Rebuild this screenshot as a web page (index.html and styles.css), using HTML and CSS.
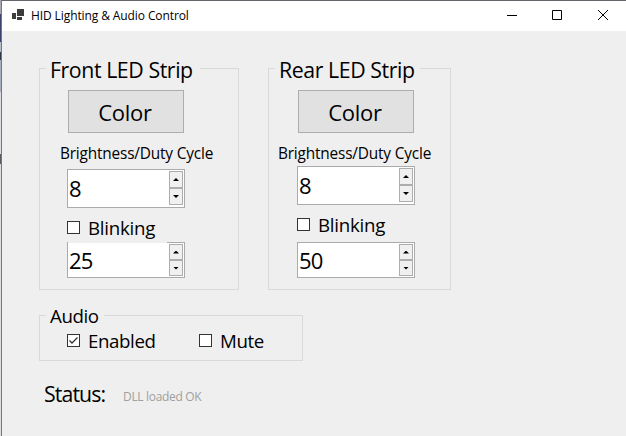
FILE: index.html
```
<!DOCTYPE html>
<html lang="en">
<head>
<meta charset="utf-8">
<title>HID Lighting &amp; Audio Control</title>
<link rel="stylesheet" href="styles.css">
</head>
<body>
<div class="desktop">
  <div class="window">
    <header class="titlebar">
      <svg class="app-icon" width="12" height="11" viewBox="0 0 12 11"><path fill="#3c3c3c" d="M0 4h4v6H0zM5 0h7v7H5zM5 8h5v3H5z"/></svg>
      <span class="title">HID Lighting &amp; Audio Control</span>
      <svg class="caption" width="102" height="12" viewBox="0 0 102 12" fill="none" stroke="#000"><path d="M0 6.500h10M45.500 1.500h9v9h-9zM91 1l10 10M101 1l-10 10"/></svg>
    </header>
    <main class="client">
      <div class="strips">
        <fieldset class="group front">
          <legend class="legend big">Front LED Strip</legend>
          <button class="color">Color</button>
          <div class="caption-label">Brightness/Duty Cycle</div>
          <div class="spinner duty"><span class="value">8</span><span class="buttons"><i class="up"></i><i class="down"></i></span></div>
          <label class="check"><span class="box"></span><span>Blinking</span></label>
          <div class="spinner rate clipped"><span class="value">25</span><span class="buttons"><i class="up"></i><i class="down"></i></span></div>
        </fieldset>
        <fieldset class="group rear">
          <legend class="legend big">Rear LED Strip</legend>
          <button class="color">Color</button>
          <div class="caption-label">Brightness/Duty Cycle</div>
          <div class="spinner duty"><span class="value">8</span><span class="buttons"><i class="up"></i><i class="down"></i></span></div>
          <label class="check"><span class="box"></span><span>Blinking</span></label>
          <div class="spinner rate"><span class="value">50</span><span class="buttons"><i class="up"></i><i class="down"></i></span></div>
        </fieldset>
      </div>
      <fieldset class="group audio">
        <legend class="legend small">Audio</legend>
        <div class="audio-row">
          <label class="check enabled"><span class="box"><svg width="11" height="11" viewBox="0 0 11 11"><path d="M1.500 5.500l2.500 2.500 5.500-5.500" fill="none" stroke="#333" stroke-width="1.300"/></svg></span><span>Enabled</span></label>
          <label class="check"><span class="box"></span><span>Mute</span></label>
        </div>
      </fieldset>
      <div class="status"><span class="status-name">Status:</span><span class="status-text">DLL loaded OK</span></div>
    </main>
  </div>
</div>
</body>
</html>
```
FILE: styles.css
```
* { box-sizing: border-box; }
body { margin: 0; font-family: "Open Sans", "Noto Sans", sans-serif; color: #000; overflow: hidden; }
.desktop {
  height: 436px;
  padding-left: 1px;
  background: linear-gradient(#a5a7b5 0 14px, #3b4270 14px 42px, #b8bcc9 42px 52px, #303848 52px 60px, #a9afbd 60px 92px, #dcdce2 92px 154px, #5c5a60 154px 164px, #dedee2 164px);
}
.window { height: 436px; border-left: 1px solid #77777a; border-top: 1px solid #66636a; background: #efefef; }
.titlebar { display: flex; align-items: center; height: 30px; padding: 0 17px 0 10px; background: #fff; }
.app-icon { margin-top: -4px; }
.title { margin-left: 7px; font-size: 12px; line-height: 30px; letter-spacing: -0.1px; white-space: nowrap; }
.caption { margin-left: auto; margin-top: -3px; }
.client { padding: 22px 0 0 37px; }
.strips { display: flex; gap: 29px; }
.group { margin: 0; border: 1px solid #d9d9d9; padding: 0; min-width: 0; white-space: nowrap; }
.legend { margin-left: 6px; padding: 0 0 0 4px; }
.big { height: 31px; font-size: 21.3px; line-height: 34px; letter-spacing: -0.42px; }
.front { width: 200px; height: 237px; }
.rear { width: 183px; height: 237px; }
.front .big { width: 154px; }
.rear .big { width: 145px; }
.color { display: block; width: 116px; height: 43px; margin: 6px 0 0 28px; padding: 0 2px 0 0; border: 1px solid #adadad; background: #e1e1e1; color: #000; font: 22px/40px "Open Sans", sans-serif; letter-spacing: -0.3px; }
.rear .color { margin-left: 29px; }
.caption-label { height: 36px; padding-left: 20px; font-size: 15.4px; line-height: 41px; letter-spacing: -0.18px; }
.rear .caption-label { height: 33px; padding-left: 9px; }
.spinner { display: flex; justify-content: space-between; width: 118px; margin-left: 27px; border: 1px solid #ababab; background: #fff; padding: 1px; }
.rear .spinner { margin-left: 28px; }
.duty { height: 39px; }
.rate { height: 36px; }
.clipped { border-top: 0; padding-top: 2px; background: linear-gradient(90deg, #efefef 99px, #ababab 99px) 0 0 / 100% 1px no-repeat #fff; }
.value { font-size: 22px; line-height: 35px; letter-spacing: -0.9px; }
.rate .value { line-height: 33px; }
.buttons { display: flex; flex-direction: column; width: 14px; height: 34px; }
.rate .buttons { height: 32px; }
.buttons i { display: flex; flex: 1; align-items: center; justify-content: center; border: 1px solid #adadad; background: #f0f0f0; }
.buttons i::before { content: ""; width: 6px; height: 3px; background: #000; clip-path: polygon(50% 0, 100% 100%, 0 100%); }
.buttons .down::before { clip-path: polygon(0 0, 100% 0, 50% 100%); }
.check { display: flex; align-items: center; height: 34px; margin-left: 27px; font-size: 18.7px; line-height: 25px; letter-spacing: -0.4px; }
.front .check { padding-top: 5px; }
.rear .check { height: 37px; margin-left: 28px; padding-top: 2px; }
.box { width: 13px; height: 13px; margin-right: 8px; border: 1px solid #333; background: #fff; line-height: 0; }
.strips .check { letter-spacing: -0.25px; }
.small { width: 58px; height: 25px; font-size: 18.7px; line-height: 25px; letter-spacing: -0.4px; }
.audio { width: 264px; height: 58px; margin-top: 13px; }
.audio-row { display: flex; }
.audio .check { height: 25px; }
.audio .enabled { width: 132px; margin-right: -27px; }
.status { display: flex; align-items: center; height: 30px; margin-top: 17px; padding-left: 5px; white-space: nowrap; }
.status-name { width: 79px; font-size: 21.3px; letter-spacing: -0.9px; }
.status-text { font-size: 12px; color: #a0a0a0; letter-spacing: -0.32px; padding-top: 7px; }
```
